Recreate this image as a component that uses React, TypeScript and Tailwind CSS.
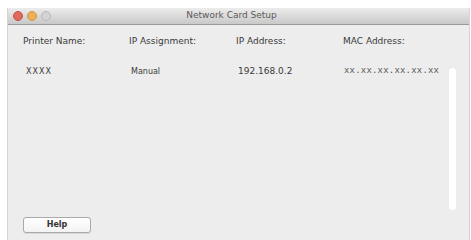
export default function App() {
  return (
    <div className="w-[471px] h-[240px] bg-white overflow-hidden pl-[7px] pt-[8px]" style={{ fontFamily: '"Lucida Grande", "DejaVu Sans", "Liberation Sans", sans-serif' }}>
      <div className="w-[463px] h-[232px] bg-[#ededed] border-l border-r border-[#d4d4d4] flex flex-col">
        {/* title bar */}
        <div className="h-[17px] bg-gradient-to-b from-[#ececec] to-[#c9c9c9] border-b border-[#9a9a9a] flex items-center relative">
          <div className="flex items-center gap-[4px] pl-[5px]">
            <span className="w-[10px] h-[10px] rounded-full bg-[#e0685c] border border-[#c4504a]" />
            <span className="w-[10px] h-[10px] rounded-full bg-[#eab35a] border border-[#cf9440]" />
            <span className="w-[10px] h-[10px] rounded-full bg-[#d3d3d3] border border-[#b8b8b8]" />
          </div>
          <div className="absolute inset-0 flex items-center justify-center text-[9px] text-[#5a5a5a] pr-[14px]">
            Network Card Setup
          </div>
        </div>

        <div className="flex-1 flex flex-col pl-[15px] relative">
          <div className="flex text-[9px] text-[#3a3a3a] mt-[11px] h-[12px] items-center">
            <div className="w-[106px]">Printer Name:</div>
            <div className="w-[107px]">IP Assignment:</div>
            <div className="w-[107px]">IP Address:</div>
            <div>MAC Address:</div>
          </div>
          <div className="flex text-[#3a3a3a] mt-[18px] h-[12px] items-center">
            <div className="w-[106px] pl-[3px] text-[8px] tracking-[1px]">XXXX</div>
            <div className="w-[107px] pl-[2px] text-[8px]">Manual</div>
            <div className="w-[107px] pl-[2px] text-[9px]">192.168.0.2</div>
            <div className="pl-[1px] text-[9px] text-[#555] tracking-[0.2px]" style={{ fontFamily: '"Liberation Mono", monospace' }}>xx.xx.xx.xx.xx.xx</div>
          </div>

          <div className="absolute left-[441px] top-[43px] w-[7px] h-[142px] bg-white rounded-full" />

          <div className="mt-auto mb-[7px]">
            <button className="w-[68px] h-[16px] bg-gradient-to-b from-white to-[#f3f3f3] border border-[#a9a9a9] rounded-[3px] text-[8px] font-bold text-[#333] flex items-center justify-center shadow-[0_1px_0_#d8d8d8]">
              Help
            </button>
          </div>
        </div>
      </div>
    </div>
  )
}
